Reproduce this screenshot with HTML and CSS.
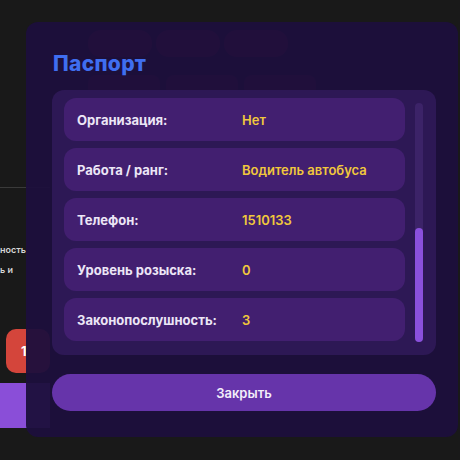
FILE: index.html
```html
<!DOCTYPE html>
<html lang="ru">
<head>
    <meta charset="UTF-8">
    <meta name="viewport" content="width=device-width, initial-scale=1.0">
    <title>Паспорт</title>
    <link rel="stylesheet" href="styles.css">
</head>
<body>
    <div class="page">
        <div class="side">
            <div class="rule"></div>
            <p class="note">ность<br>ь и</p>
            <div class="badge">1</div>
            <div class="block"></div>
        </div>
        <div class="main">
            <div class="pill-row">
                <span class="pill"></span>
                <span class="pill"></span>
                <span class="pill"></span>
            </div>
            <div class="pill-row second">
                <span class="pill wide"></span>
                <span class="pill wide"></span>
                <span class="pill wide"></span>
            </div>
            <div class="tiles">
                <span class="tile"></span>
                <span class="tile"></span>
            </div>
        </div>
    </div>

    <div class="modal">
        <h1 class="modal-title">Паспорт</h1>
        <div class="info-box">
            <div class="info-list">
                <div class="info-row">
                    <span class="label">Организация:</span>
                    <span class="value">Нет</span>
                </div>
                <div class="info-row">
                    <span class="label">Работа / ранг:</span>
                    <span class="value">Водитель автобуса</span>
                </div>
                <div class="info-row">
                    <span class="label">Телефон:</span>
                    <span class="value">1510133</span>
                </div>
                <div class="info-row">
                    <span class="label">Уровень розыска:</span>
                    <span class="value">0</span>
                </div>
                <div class="info-row">
                    <span class="label">Законопослушность:</span>
                    <span class="value">3</span>
                </div>
            </div>
            <div class="scroll-track">
                <div class="scroll-thumb"></div>
            </div>
        </div>
        <button class="close-btn">Закрыть</button>
    </div>
</body>
</html>
```

FILE: styles.css
```css
body {
    margin: 0;
    padding: 0;
    background: #191919;
    font-family: 'Inter', 'Noto Sans', sans-serif;
    width: 460px;
    height: 460px;
    overflow: hidden;
    position: relative;
}

/* page behind the modal */
.page {
    display: flex;
    height: 460px;
}

.side {
    width: 50px;
    padding-top: 187px;
    display: flex;
    flex-direction: column;
}

.rule {
    height: 1px;
    background: #3a3a3a;
}

.note {
    margin: 52px 0 0 0;
    font-size: 9px;
    line-height: 20px;
    font-weight: 600;
    color: #d6d6d6;
}

.badge {
    margin: 49px 0 0 6px;
    width: 44px;
    height: 44px;
    border-radius: 10px;
    background: #d4453b;
    color: #fff;
    font-size: 13px;
    font-weight: 700;
    line-height: 44px;
    padding-left: 15px;
    box-sizing: border-box;
}

.block {
    margin-top: 10px;
    height: 45px;
    background: #8a4ed8;
}

.main {
    padding: 30px 0 0 38px;
    display: flex;
    flex-direction: column;
    gap: 18px;
}

.pill-row {
    display: flex;
    gap: 4px;
}

.pill {
    width: 64px;
    height: 27px;
    border-radius: 13px;
    background: #7a1e30;
}

.pill-row.second {
    gap: 6px;
}

.pill.wide {
    width: 72px;
    height: 22px;
    border-radius: 8px;
    background: #5c1a34;
}

.tiles {
    display: flex;
    gap: 12px;
    margin-left: 102px;
    margin-top: -18px;
}

.tile {
    width: 50px;
    height: 45px;
    border-radius: 8px;
    background: #6a6f86;
}

/* modal */
.modal {
    position: absolute;
    left: 26px;
    top: 22px;
    width: 432px;
    box-sizing: border-box;
    padding: 30px 22px 26px 26px;
    background: rgba(28, 15, 60, 0.95);
    border-radius: 12px;
}

.modal-title {
    margin: 0 0 14px 1px;
    font-size: 21px;
    line-height: 24px;
    font-weight: 800;
    letter-spacing: 0.3px;
    color: #3f6ef0;
}

.info-box {
    display: flex;
    background: #2d1855;
    border-radius: 12px;
    padding: 8px 13px 13px 12px;
}

.info-list {
    flex: 1;
    display: flex;
    flex-direction: column;
    gap: 7px;
}

.info-row {
    display: flex;
    align-items: center;
    height: 43px;
    padding-left: 13px;
    border-radius: 12px;
    background: #421f70;
}

.label {
    width: 165px;
    font-size: 13px;
    font-weight: 700;
    color: #ece6f6;
}

.value {
    font-size: 13px;
    font-weight: 600;
    color: #f1c83c;
}

.scroll-track {
    width: 8px;
    margin: 5px 0 0 10px;
    height: 239px;
    border-radius: 4px;
    background: #3c2368;
    position: relative;
}

.scroll-thumb {
    position: absolute;
    left: 0;
    right: 0;
    top: 125px;
    height: 114px;
    border-radius: 4px;
    background: #8a50dc;
}

.close-btn {
    display: block;
    width: 100%;
    height: 37px;
    margin-top: 19px;
    border: none;
    border-radius: 19px;
    background: #6634aa;
    color: #f3eefa;
    font-family: 'Inter', 'Noto Sans', sans-serif;
    font-size: 13px;
    font-weight: 600;
}
```
